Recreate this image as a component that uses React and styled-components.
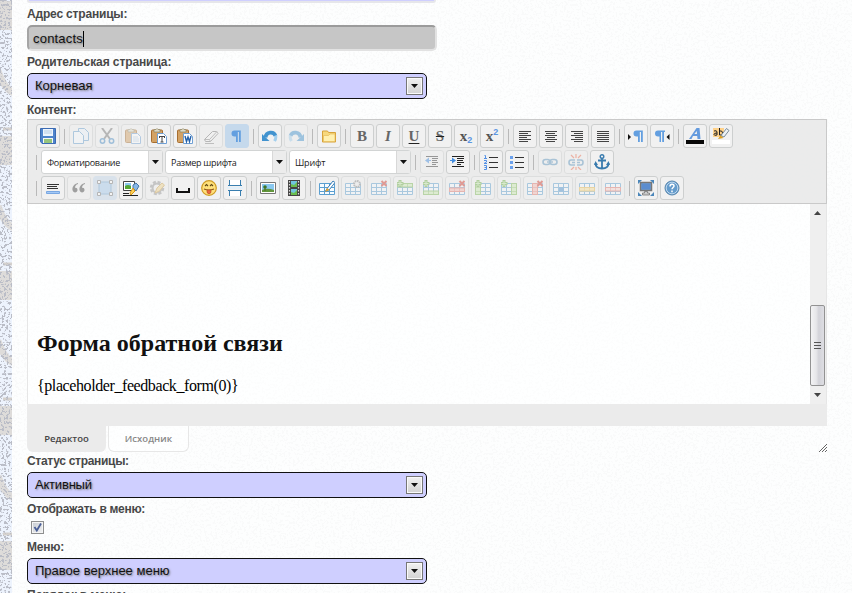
import React from "react";
import styled, { createGlobalStyle } from "styled-components";

const GlobalStyle = createGlobalStyle`
  * { box-sizing: border-box; }
  html, body { margin: 0; overflow: hidden; }
  body { font-family: "Liberation Sans", Arial, sans-serif; background: #fcfcfc; }
`;

const Page = styled.div`
  display: grid;
  grid-template: 593px / 12px 840px;
  overflow: hidden;
  width: 852px;
  height: 593px;
`;
const Texture = styled.svg`
  grid-area: 1 / 1 / 2 / 3;
  width: 852px;
  height: 593px;
`;
const Panel = styled.main`
  grid-area: 1 / 2;
  display: flex;
  flex-direction: column;
  align-items: flex-start;
  height: 593px;
  overflow: hidden;
  padding-left: 15px;
  background: rgba(254, 254, 254, 0.93);
`;
const PreviousField = styled.div`
  flex: none;
  width: 409px;
  height: 3px;
  background: rgba(200, 200, 255, 0.88);
  border: solid #e6e6ea;
  border-width: 0 2px 2px;
  border-radius: 0 0 4px 4px;
`;
const Label = styled.label`
  flex: none;
  display: block;
  height: ${(p) => p.$h || 22}px;
  line-height: ${(p) => p.$line || p.$h || 22}px;
  font-size: 12px;
  font-weight: bold;
  color: #484848;
  white-space: nowrap;
  letter-spacing: ${(p) => p.$ls || 0}px;
`;
const fieldText = `
  font-size: 13px;
  color: #111;
  text-shadow: 1px 1px 2px #777;
  white-space: nowrap;
`;
const TextField = styled.div`
  ${fieldText}
  flex: none;
  display: flex;
  align-items: center;
  width: 410px;
  height: 26px;
  padding: 1px 4px 0;
  background: rgba(190, 190, 190, 0.88);
  border: 2px solid;
  border-color: #9b9b9b #e2e2e2 #e2e2e2 #a5a5a5;
  border-radius: 5px;
  letter-spacing: ${(p) => p.$ls || 0}px;
`;
const Caret = styled.span`
  width: 1px;
  height: 16px;
  background: #000;
`;
const SelectBox = styled.div`
  ${fieldText}
  flex: none;
  display: flex;
  align-items: center;
  justify-content: space-between;
  width: 400px;
  height: 26px;
  padding: 0 3px 0 7px;
  background: rgba(200, 200, 255, 0.88);
  border: 1px solid #111;
  border-radius: 5px;
  letter-spacing: ${(p) => p.$ls || 0}px;
`;
const SelectValue = styled.span`
  line-height: 16px;
`;
const SelectArrow = styled.span`
  display: flex;
  align-items: center;
  justify-content: center;
  width: 17px;
  height: 18px;
  border: 1px solid #777;
  box-shadow: inset 0 0 0 1px #fafafa;
  background: linear-gradient(#f1f1f1, #d2d2d2);
`;
const CheckRow = styled.div`
  flex: none;
  height: 17px;
  padding: 1px 0 0 4px;
`;
const CheckBox = styled.span`
  display: flex;
  width: 13px;
  height: 13px;
  border: 1px solid #8e8f8f;
  box-shadow: inset 0 0 0 1px #f4f4f4;
  background: linear-gradient(135deg, #c6cbd2, #f2f2f2);
`;

const Editor = styled.section`
  flex: none;
  display: flex;
  flex-direction: column;
  width: 800px;
  height: 333px;
`;
const Toolbar = styled.div`
  flex: none;
  display: flex;
  flex-direction: column;
  gap: 2px;
  height: 85px;
  padding: 4px 0 0 8px;
  border: 1px solid #c9c9c9;
  background: rgba(232, 232, 232, 0.85);
`;
const ToolRow = styled.div`
  display: flex;
  height: 24px;
  align-items: center;
`;
const Group = styled.div`
  display: flex;
  gap: 2px;
`;
const Separator = styled.span`
  flex: none;
  width: 1px;
  height: 15px;
  margin: 0 4px 0 ${(p) => (p.$first ? 0 : 4)}px;
  background: #b9b9b9;
`;
const ToolButton = styled.span`
  display: flex;
  align-items: center;
  justify-content: center;
  width: 24px;
  height: 24px;
  border: 1px solid ${(p) => (p.$active ? "#c5d9ec" : "#cdcfcf")};
  border-radius: 3px;
  background: ${(p) => (p.$active ? "#c5d9ec" : "rgba(243,243,243,.7)")};
  opacity: ${(p) => (p.$dim ? 0.45 : 1)};
`;
const Combo = styled.span`
  display: flex;
  width: 122px;
  height: 24px;
  border: 1px solid #d2d4d4;
  border-radius: 3px;
  background: #fff;
  font: 9px/23px "Open Sans", "Noto Sans", sans-serif;
  color: #222;
  justify-content: space-between;
  padding-left: 5px;
  white-space: nowrap;
  letter-spacing: ${(p) => p.$ls || 0}px;
`;
const ComboArrow = styled.span`
  display: flex;
  align-items: center;
  justify-content: center;
  width: 14px;
  background: #ececec;
  border-left: 1px solid #d8d8d8;
`;
const EditArea = styled.div`
  display: flex;
  height: 200px;
  border-left: 1px solid #e6e6e6;
  border-right: 1px solid #e6e6e6;
  background: rgba(255, 255, 255, 0.5);
`;
const Document = styled.article`
  flex: 1;
  padding: 124px 0 0 9px;
  font-family: "Liberation Serif", "Times New Roman", serif;
  color: #111;
`;
const Heading = styled.h2`
  margin: 0;
  font-size: 24px;
  line-height: 30px;
`;
const Paragraph = styled.p`
  margin: 18px 0 0;
  font-size: 16px;
  line-height: 20px;
  letter-spacing: -0.41px;
  color: #000;
`;
const ScrollTrack = styled.div`
  display: flex;
  flex-direction: column;
  align-items: flex-start;
  width: 16px;
  background: rgba(236, 236, 236, 0.85);
`;
const ScrollEnd = styled.span`
  display: flex;
  align-items: center;
  justify-content: center;
  width: 15px;
  height: ${(p) => p.$h}px;
`;
const ScrollGap = styled.span`
  height: 84px;
`;
const ScrollThumb = styled.span`
  display: flex;
  align-items: center;
  justify-content: center;
  width: 15px;
  height: 81px;
  border: 1px solid #929292;
  border-radius: 2px;
  background: linear-gradient(90deg, #f3f3f4, #e6e6e9 40%, #d3d3d9 60%, #dedee3);
`;
const StatusBar = styled.div`
  height: 22px;
  background: rgba(233, 233, 233, 0.9);
`;
const Tabs = styled.div`
  display: flex;
  gap: 2px;
  height: 26px;
`;
const Tab = styled.span`
  width: ${(p) => (p.$active ? 79 : 81)}px;
  height: 26px;
  border: ${(p) => (p.$active ? "0" : "1px solid #e7e7e7")};
  border-top: 0;
  border-radius: 0 0 6px 6px;
  background: ${(p) => (p.$active ? "rgba(233,233,233,.9)" : "rgba(255,255,255,.5)")};
  color: ${(p) => (p.$active ? "#444" : "#888")};
  font: 600 9.5px/26px "Open Sans", "Noto Sans", sans-serif;
  text-align: center;
  letter-spacing: ${(p) => (p.$active ? 0 : 0.05)}px;
`;
const ResizeGrip = styled.svg`
  margin: 18px 0 0 auto;
`;

const Icon = ({ children, w = 16, h = 16 }) => (
  <svg width={w} height={h} viewBox={`0 0 ${w} ${h}`} fill="none">{children}</svg>
);
const Down = ({ c = "#111" }) => <Icon w={7} h={4}><path d="M0 0h7L3.5 4z" fill={c} /></Icon>;

const Lines = ({ list, c = "#444" }) => (
  <Icon>{list.map(([x, y, w], i) => <path key={i} d={`M${x} ${y + 0.5}h${w}`} stroke={c} />)}</Icon>
);
const align = (mode) => {
  const ws = [12, 9, 12, 8, 12, 9];
  return ws.map((w, i) => {
    const n = mode === "j" ? 12 : w;
    return [mode === "r" ? 14 - n : mode === "c" ? 2 + Math.floor((12 - n) / 2) : 2, 3 + i * 2, n];
  });
};
const Letter = styled.span`
  font: ${(p) => p.$style || "normal"} bold 15px/20px "Liberation Serif", serif;
  color: #666;
  text-decoration: ${(p) => p.$deco || "none"};
  text-decoration-thickness: 1px;
  text-decoration-color: #222;
  text-underline-offset: 2px;
`;
const ScriptLetter = styled.span`
  display: flex;
  align-items: ${(p) => (p.$up ? "flex-start" : "flex-end")};
  font: bold 15px/17px "Liberation Serif", serif;
  color: #555;
`;
const ScriptDigit = styled.span`
  font: bold 9px/9px "Liberation Sans", sans-serif;
  color: #5b95e2;
`;

const Clip = ({ children }) => (
  <Icon>
    <rect x="0.5" y="2" width="11" height="12.5" rx="1" fill="#d3a264" stroke="#a66e30" />
    <path d="M3 3V1.5h2L6 .5l1 1h2V4H3z" fill="#dddac8" stroke="#8e8463" strokeWidth=".7" />
    <path d="M6.5 5.5h6l3 3v7h-9z" fill="#fff" stroke="#70a0d4" />
    {children}
  </Icon>
);
const Table = ({ mark, row, col, cell, color, edge }) => (
  <Icon>
    <path d="M.5 3.500h15v11H.5z" fill="#f8fcff" stroke="#5b9fd0" />
    <path d="M1 7.500h15M1 11.500h15M5.500 3v12M10.500 3v12" stroke="#5b9fd0" />
    {row !== undefined && <rect x=".5" y={row} width="15" height="3.500" fill={color} stroke={edge} />}
    {col !== undefined && <rect x={col} y="3.500" width="5" height="11" fill={color} stroke={edge} />}
    {row !== undefined && <path d={`M5.500 ${row}v3.500M10.500 ${row}v3.500`} stroke={edge} strokeWidth=".6" />}
    {col !== undefined && <path d={`M${col} 7.500h5M${col} 11.500h5`} stroke={edge} strokeWidth=".6" />}
    {cell && <rect x="6" y="7" width="5" height="4.500" fill="#4b92d0" />}
    {mark === "+" && <path d="M3 0v7M-.500 3.500h7" stroke="#6cae45" strokeWidth="3" />}
    {mark === "+" && <path d="M3 1v5M.5 3.500h5" stroke="#c5e8ad" />}
    {mark === "x" && <path d="M10.500 1l5 5m0-5l-5 5" stroke="#d43b2f" strokeWidth="2" />}
    {mark === "gear" && <circle cx="12" cy="4" r="3" fill="#eee" stroke="#888" strokeWidth="2" strokeDasharray="1.600 .7" />}
    {mark === "pen" && <path d="M6.500 11l2-3L14 1l2 1.500-5.500 7-4 2z" fill="#fff" stroke="#397eb8" />}
    {mark === "pen" && <path d="M6 12l2-4 2.500 2z" fill="#e8a52f" />}
  </Icon>
);
const GREEN = { color: "#cdebb5", edge: "#7eb955" };
const RED = { color: "#f8bcb4", edge: "#e0746a" };
const Pilcrow = ({ x = 0 }) => (
  <path d={`M${x + 12} 2.500H${x + 5.500}a3 3 0 000 6h1.500V14h1.800V4h1.200v10h1.800V2.500z`} fill="#639fe0" />
);

const icons = {
  save: <Icon><path d="M.5.5h15v15H2l-1.500-2z" fill="#4f84cc" stroke="#3b6bb3" /><path d="M3 1h10v7H3z" fill="#eef5fd" /><path d="M4 3h8M4 5h8" stroke="#b5cbe4" /><path d="M3 10h10v5H3z" fill="#f6f8f4" /><path d="M4 12h8M4 14h8" stroke="#77b254" strokeWidth="1.300" /></Icon>,
  copy: <Icon><path d="M5.500.5h6l4 4v8h-10z" fill="#eef6fd" stroke="#659fcf" /><path d="M.5 3.500h6l4 4v8H.5z" fill="#f8fcff" stroke="#659fcf" /></Icon>,
  cut: <Icon><path d="M3 0l8 11M13 0L5 11" stroke="#777" strokeWidth="2" /><circle cx="3.500" cy="13" r="2.200" stroke="#468bc5" strokeWidth="1.500" /><circle cx="12.500" cy="13" r="2.200" stroke="#468bc5" strokeWidth="1.500" /></Icon>,
  paste: <Clip><path d="M8 9h5M8 11h6M8 13h6" stroke="#b8d2eb" /></Clip>,
  pasteT: <Clip><path d="M8 8.500h6M11 8v6M9.500 14h3M8.500 8v2M13.500 8v2" stroke="#444" /></Clip>,
  pasteW: <Clip><path d="M8 8l1.500 5.500L11 9l1.500 4.500L14 8" stroke="#2461aa" strokeWidth="1.400" /></Clip>,
  eraser: <Icon><path d="M1.500 11.500l8-8h4l1.500 2-7.500 8h-5z" fill="#f8f8f8" stroke="#777" /><path d="M1.500 11.500h5l1 2M6.500 11.500l7.500-8M2 15.500h9" stroke="#888" /></Icon>,
  pilcrow: <Icon><Pilcrow /></Icon>,
  undo: <Icon><path d="M3.500 9.500C4 3.500 12 3 13.500 8" stroke="#4293cf" strokeWidth="3.800" /><path d="M0 6v7h7.500z" fill="#4293cf" /><path d="M13.500 7.500c.7 2 0 4-1 5.500" stroke="#a3cfed" strokeWidth="3" /></Icon>,
  redo: <Icon><path d="M12.500 9.500C12 3.500 4 3 2.500 8" stroke="#4293cf" strokeWidth="3.800" /><path d="M16 6v7H8.500z" fill="#4293cf" /><path d="M2.500 7.500c-.7 2 0 4 1 5.500" stroke="#a3cfed" strokeWidth="3" /></Icon>,
  folder: <Icon><path d="M1.500 14V3h5l1 1.500h7V14z" fill="#f7d87c" stroke="#d7a33b" /><path d="M2.500 7.500h5l1.500-1.500h5v7.500h-11.500z" fill="#fff0b0" stroke="#e3b54e" strokeWidth=".6" /></Icon>,
  bold: <Letter>B</Letter>,
  italic: <Letter $style="italic">I</Letter>,
  underline: <Letter $deco="underline">U</Letter>,
  strike: <Letter $deco="line-through">S</Letter>,
  sub: <ScriptLetter>x<ScriptDigit>2</ScriptDigit></ScriptLetter>,
  sup: <ScriptLetter $up>x<ScriptDigit>2</ScriptDigit></ScriptLetter>,
  left: <Lines list={align("l")} />,
  center: <Lines list={align("c")} />,
  right: <Lines list={align("r")} />,
  justify: <Lines list={align("j")} />,
  ltr: <Icon><Pilcrow x={3} /><path d="M0 6l3 3-3 3z" fill="#111" /></Icon>,
  rtl: <Icon><path d="M12 2.500H5a3 3 0 000 6h1.500V14H8V4h1.200v10H11V4h1z" fill="#639fe0" transform="translate(-1)" /><path d="M15.500 6l-3 3 3 3z" fill="#111" /></Icon>,
  color: <Icon w={18} h={18}><path d="M3 12L10.500 1h3l1 11h-3l-.3-3H7l-1.500 3zM8.300 7H11l-.2-3z" fill="#639ade" /><path d="M0 13h18v4H0z" fill="#080808" /></Icon>,
  highlight: <Icon w={18} h={18}><path d="M1 1h11v9H1z" fill="#ffd28a" /><path d="M2 4q3-1 3 1v3q-3 1-3-.7Q2 6 5 6M7.500 1v7h1.500q1.500 0 1.500-2T9 4H7.500" stroke="#222" /><path d="M9 8.500l5.500-7 2.500 2-5 6.500z" fill="#edf1f4" stroke="#7a8c99" /><path d="M6 12l2.500-3.500 3 2.500z" fill="#db9f20" /><path d="M0 13h18v4H0z" fill="#fff" /></Icon>,
  outdent: <Icon><path d="M2 2.500h12M8 4.500h6M8 6.500h5M8 8.500h6M8 10.500h4M2 12.500h12" stroke="#333" /><path d="M5 3.500v6L1 6.500zM5 6h2v1H5z" fill="#438de0" /></Icon>,
  indent: <Icon><path d="M2 2.500h12M7 4.500h7M7 6.500h6M7 8.500h7M7 10.500h4M2 12.500h12" stroke="#222" /><path d="M2 3.500v6l4-3zM0 6h2v1H0z" fill="#438de0" /></Icon>,
  ol: <Icon><path d="M6 3.500h9M6 8.500h9M6 13.500h9" stroke="#333" /><path d="M1.500 1.500h1v3M1 4.500h3M1 6.500h2.500v1.500L1 9.500h3M1 11.500h2.500v4H1M1.500 13.500h2" stroke="#5290e5" /></Icon>,
  ul: <Icon><path d="M6 3.500h9M6 8.500h9M6 13.500h9" stroke="#333" /><path d="M1 2h3v3H1zM1 7h3v3H1zM1 12h3v3H1z" fill="#6aa0ec" /></Icon>,
  link: <Icon><rect x="1" y="5.500" width="7" height="5" rx="2.500" stroke="#5b94be" strokeWidth="1.600" /><rect x="8" y="5.500" width="7" height="5" rx="2.500" stroke="#5b94be" strokeWidth="1.600" /><path d="M5 8h6" stroke="#5b94be" strokeWidth="1.400" /></Icon>,
  unlink: <Icon><path d="M7 6H3q-2 0-2 2.500T3 11h4M9 6h4q2 0 2 2.500T13 11H9M4 8.500h3M9 8.500h3" stroke="#5b94be" strokeWidth="1.600" /><path d="M8 0v4M3 1l3 3M13 1l-3 3M8 13v3M3 16l3-3M13 16l-3-3" stroke="#ef6e50" strokeWidth="1.200" /></Icon>,
  anchor: <Icon><circle cx="8" cy="2.500" r="1.800" stroke="#397bae" strokeWidth="1.400" /><path d="M8 4v11M4 6.500h8M1.500 9c0 4 3 5.500 6.500 5.500S14.500 13 14.500 9" stroke="#397bae" strokeWidth="1.800" /><path d="M0 11l1.500-4L4 11zM16 11l-1.500-4L12 11z" fill="#397bae" /></Icon>,
  hr: <Icon><path d="M2 4.500h12M2 6.500h10M2 8.500h11" stroke="#333" /><path d="M1.500 11.500h13v2h-13z" fill="#a3c8f5" stroke="#78a7e2" /></Icon>,
  quote: <Icon><path d="M7 3C3 4 1 7 1.500 10c.5 3.500 5 3 5 0C6.500 8 5 7.500 4 8c0-2 1-3.500 3-4zM14 3c-4 1-6 4-5.500 7 .5 3.500 5 3 5 0 0-2-1.500-2.500-2.500-2 0-2 1-3.500 3-4z" fill="#444" /></Icon>,
  div: <Icon><path d="M2 2h12v12H2z" fill="#a5ccef" stroke="#6c9fca" /><path d="M.5.5h3v3h-3zM12.500.5h3v3h-3zM.5 12.500h3v3h-3zM12.500 12.500h3v3h-3z" fill="#fff" stroke="#777" /></Icon>,
  styleImage: <Icon w={18}><path d="M1.500 1.500h11v9h-11z" fill="#fff" stroke="#444" /><path d="M3 3h6v6H3z" fill="#8cc7ef" /><path d="M3 6q3-2 6 0v3H3z" fill="#54a635" /><path d="M11 5l3-2 3 3-3 5-3-3z" fill="#87b7e7" stroke="#4776a5" /><path d="M11 8l2 3-4 4-1-2z" fill="#ffd158" stroke="#d69717" /><path d="M1 13.500h6M1 15.500h15" stroke="#222" /></Icon>,
  gear: <Icon><circle cx="8" cy="8" r="5.500" stroke="#999" strokeWidth="3.500" strokeDasharray="2.700 1.600" /><circle cx="8" cy="8" r="4.500" stroke="#999" strokeWidth="2" /><path d="M6 13l2-5 5-5 2.500 2-5 6z" fill="#f2d58f" stroke="#d0a34d" /></Icon>,
  space: <Icon><path d="M2 8v4h12V8" stroke="#111" strokeWidth="2" /></Icon>,
  smile: <Icon><circle cx="8" cy="8" r="7.300" fill="#ffe07a" stroke="#cf9b23" strokeWidth="1.200" /><path d="M4 6l1.500-1.500L7 6M9 6l1.500-1.500L12 6" stroke="#634a15" strokeWidth="1.100" /><path d="M3 9q5 2 10 0" stroke="#8a5516" strokeWidth="1.200" /><path d="M6 10h4v2.500q-2 3-4 0z" fill="#e9663e" stroke="#b55423" strokeWidth=".6" /></Icon>,
  pagebreak: <Icon><path d="M2.500 0v5.500h11V0M2.500 16v-5.500h11V16" fill="#fff" /><path d="M2.500 0v5.500h11V0M1 5.500h14M2.500 16v-5.500h11V16M1 10.500h14" stroke="#397eaf" /><path d="M0 8h16" stroke="#e3f1fb" strokeWidth="2" /></Icon>,
  image: <Icon><path d="M.5 2.500h15v11H.5z" fill="#fff" stroke="#777" /><path d="M2 4h12v8H2z" fill="#8ac8f0" /><path d="M2 10q5-2.500 12 0v2H2z" fill="#62963c" /><circle cx="5" cy="7" r="1.800" fill="#3b7727" /><path d="M5 7v4" stroke="#4c6a28" /></Icon>,
  film: <Icon><path d="M2 0h12v16H2z" fill="#444" /><path d="M5 1h6v6H5zM5 9h6v6H5z" fill="#70c5df" /><path d="M5 4l3 1 3-3v5H5zM5 12l3 1 3-3v5H5z" fill="#6abe4f" /><path d="M3.500 1v15M12.500 1v15" stroke="#ddd" strokeWidth="1.200" strokeDasharray="1.500 1.500" /></Icon>,
  maximize: <Icon><path d="M2.500 2.500h11v8h-11z" fill="#659ad9" stroke="#777" strokeWidth="1.500" /><path d="M4 4h8v5H4z" fill="#5b8dcf" /><path d="M6.500 11.500h3v1.500h2v2h-7v-2h2z" fill="#ccc" stroke="#777" strokeWidth=".8" /><path d="M0 4V0h4zM12 0h4v4zM0 12v4h4zM16 12v4h-4z" fill="#4a86ba" /></Icon>,
  help: <Icon><circle cx="8" cy="8" r="7" fill="#659ccc" stroke="#5785ac" /><circle cx="8" cy="8" r="5.800" stroke="#c7def2" strokeWidth=".9" /><path d="M6 6.500c0-3 4-3 4-.5C10 7.500 8 7.500 8 9.300M8 10.500v1.700" stroke="#fff" strokeWidth="1.500" /></Icon>,
  table: <Table mark="pen" />,
  tprops: <Table mark="gear" />,
  tdelete: <Table mark="x" />,
  rowBefore: <Table mark="+" row={3.5} {...GREEN} />,
  rowAfter: <Table mark="+" row={11} {...GREEN} />,
  rowDelete: <Table mark="x" row={8} {...RED} />,
  colBefore: <Table mark="+" col={0.5} {...GREEN} />,
  colAfter: <Table mark="+" col={10.5} {...GREEN} />,
  colDelete: <Table mark="x" col={5.5} {...RED} />,
  cellProps: <Table cell />,
  merge: <Table row={7.5} color="#fae29a" edge="#e5b84d" />,
  split: <Table row={7.5} color="#fbd5d0" edge="#e0746a" />,
};

// A trailing "-" marks a disabled command and "*" an active one.
const row1 = ["save", "copy- cut- paste- pasteT pasteW eraser- pilcrow*", "undo redo-", "folder", "bold italic underline strike sub sup", "left center right justify", "ltr rtl", "color highlight"];
const row2 = ["outdent- indent", "ol ul", "link- unlink- anchor"];
const row3 = ["hr quote- div-* styleImage gear- space smile pagebreak", "image film", "table tprops- tdelete- rowBefore- rowAfter- rowDelete- colBefore- colAfter- colDelete- cellProps- merge- split-", "maximize help"];

const ToolGroup = ({ names }) => (
  <Group>
    {names.split(" ").map((n) => (
      <ToolButton key={n} $dim={n.includes("-")} $active={n.includes("*")}>
        {icons[n.replace(/[-*]/g, "")]}
      </ToolButton>
    ))}
  </Group>
);
const ToolGroups = ({ groups }) => groups.map((g, i) => (
  <React.Fragment key={g}>
    {i > 0 && <Separator />}
    <ToolGroup names={g} />
  </React.Fragment>
));
const ComboBox = ({ text, ls }) => <Combo $ls={ls}>{text}<ComboArrow><Down /></ComboArrow></Combo>;
const Select = ({ text, ls }) => (
  <SelectBox $ls={ls}><SelectValue>{text}</SelectValue><SelectArrow><Down /></SelectArrow></SelectBox>
);

// The stone tile repeats every 135px: a warm block, then a diagonal vein.
const TILES = [-134, 1, 136, 271, 406, 541];
const StoneTexture = () => (
  <Texture viewBox="0 0 852 593">
    <defs>
      <filter id="speckle" x="0" y="0" width="100%" height="100%" colorInterpolationFilters="sRGB">
        <feTurbulence type="fractalNoise" baseFrequency=".45" numOctaves="3" seed="5" />
        <feColorMatrix values="0 0 0 0 .73  0 0 0 0 .74  0 0 0 0 .78  16 0 0 0 -8.700" />
      </filter>
    </defs>
    <rect width="852" height="593" fill="#edf3fd" />
    {TILES.map((y) => (
      <g key={y}>
        <path d={`M0 ${y}h12v29H0z`} fill="#dedcda" />
        <path d={`M-2 ${y + 70}q6 18 16 22`} stroke="#dedcda" strokeWidth="7" fill="none" />
        <path d={`M3 ${y + 128}h9`} stroke="#d5d1cd" strokeWidth="3" />
      </g>
    ))}
    <rect width="852" height="593" filter="url(#speckle)" />
  </Texture>
);

export default function App() {
  return (
    <>
      <GlobalStyle />
      <Page>
        <StoneTexture />
        <Panel>
          <PreviousField />
          <Label $ls={-0.18}>Адрес страницы:</Label>
          <TextField $ls={0.2}>contacts<Caret /></TextField>
          <Label $ls={-0.1}>Родительская страница:</Label>
          <Select text="Корневая" />
          <Label $h={20} $line={22} $ls={-0.3}>Контент:</Label>
          <Editor>
            <Toolbar>
              <ToolRow><ToolGroups groups={row1} /></ToolRow>
              <ToolRow>
                <Separator $first />
                <Group>
                  <ComboBox text="Форматирование" ls={-0.3} />
                  <ComboBox text="Размер шрифта" ls={-0.28} />
                  <ComboBox text="Шрифт" ls={-0.2} />
                </Group>
                <Separator />
                <ToolGroups groups={row2} />
              </ToolRow>
              <ToolRow><Separator $first /><ToolGroups groups={row3} /></ToolRow>
            </Toolbar>
            <EditArea>
              <Document>
                <Heading>Форма обратной связи</Heading>
                <Paragraph>{"{placeholder_feedback_form(0)}"}</Paragraph>
              </Document>
              <ScrollTrack>
                <ScrollEnd $h={17}><Icon w={7} h={4}><path d="M0 4h7L3.500 0z" fill="#444" /></Icon></ScrollEnd>
                <ScrollGap />
                <ScrollThumb><Icon w={7} h={8}><path d="M0 .5h7M0 3.500h7M0 6.500h7" stroke="#555" /></Icon></ScrollThumb>
                <ScrollEnd $h={18}><Down c="#444" /></ScrollEnd>
              </ScrollTrack>
            </EditArea>
            <StatusBar />
            <Tabs>
              <Tab $active>Редактоо</Tab>
              <Tab>Исходник</Tab>
              <ResizeGrip width="8" height="8" viewBox="0 0 8 8"><path d="M0 8l8-8M3 8l5-5M6 8l2-2" stroke="#666" /></ResizeGrip>
            </Tabs>
          </Editor>
          <Label $h={20} $line={18} $ls={-0.3}>Статус страницы:</Label>
          <Select text="Активный" ls={-0.2} />
          <Label $ls={-0.3}>Отображать в меню:</Label>
          <CheckRow>
            <CheckBox><Icon w={11} h={11}><path d="M2.500 5l2.300 3.500L9 1.500" stroke="#4a5f97" strokeWidth="1.800" /></Icon></CheckBox>
          </CheckRow>
          <Label $h={21} $ls={-0.2}>Меню:</Label>
          <Select text="Правое верхнее меню" />
          <Label $ls={-0.2}>Порядок в меню:</Label>
        </Panel>
      </Page>
    </>
  );
}
